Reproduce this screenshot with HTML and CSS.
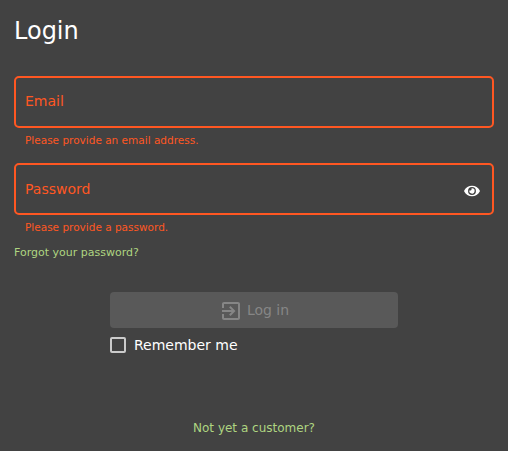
FILE: index.html
```html
<!DOCTYPE html>
<html lang="en">
<head>
<meta charset="utf-8">
<title>Login</title>
<link rel="stylesheet" href="styles.css">
</head>
<body>
<main class="login">
  <h1 class="title">Login</h1>
  <div class="field"><span class="label">Email</span></div>
  <p class="error">Please provide an email address.</p>
  <div class="field field-password"><span class="label">Password</span>
    <svg class="eye" viewBox="0 0 576 512"><path d="M572.520 241.400C518.290 135.590 410.930 64 288 64S57.680 135.640 3.480 241.410a32.350 32.350 0 0 0 0 29.190C57.710 376.410 165.070 448 288 448s230.320-71.640 284.520-177.410a32.350 32.350 0 0 0 0-29.190zM288 400a144 144 0 1 1 144-144 143.930 143.930 0 0 1-144 144zm0-240a95.310 95.310 0 0 0-25.310 3.790 47.850 47.850 0 0 1-66.900 66.900A95.780 95.780 0 1 0 288 160z"/></svg>
  </div>
  <p class="error">Please provide a password.</p>
  <a class="forgot">Forgot your password?</a>
  <div class="actions">
    <button class="submit" disabled>
      <svg class="enter" viewBox="0 0 24 24"><path d="M10.090 15.590L11.500 17l5-5-5-5-1.410 1.410L12.670 11H3v2h9.670l-2.580 2.590zM19 3H5c-1.110 0-2 .9-2 2v4h2V5h14v14H5v-4H3v4c0 1.100.89 2 2 2h14c1.100 0 2-.9 2-2V5c0-1.100-.9-2-2-2z"/></svg>
      <span>Log in</span>
    </button>
    <label class="remember"><span class="box"></span>Remember me</label>
  </div>
  <a class="signup">Not yet a customer?</a>
</main>
</body>
</html>
```

FILE: styles.css
```css
* { box-sizing: border-box; }
body { margin: 0; background: #424242; color: #fff; font-family: "DejaVu Sans", sans-serif; font-size: 14px; }
.login { display: flex; flex-direction: column; height: 451px; padding: 15px 14px 14px; }
.title { margin: 0 0 29px; font-size: 24px; line-height: 32px; font-weight: 400; }
.field { display: flex; align-items: center; justify-content: space-between; height: 52px; padding: 0 12px 2px 9px; border: 2px solid #ff5722; border-radius: 5px; color: #ff5722; }
.field-password { padding-bottom: 0; }
.label { line-height: 20px; }
.eye { width: 16px; height: 14px; margin-top: 4px; fill: #fff; }
.error { margin: 5px 0 15px 11px; height: 15px; line-height: 15px; font-size: 10.5px; color: #ff5722; }
.forgot { margin-top: -5px; line-height: 15px; font-size: 11px; color: #aed581; }
.actions { width: 288px; margin: 32px auto 0; }
.submit { display: flex; align-items: center; justify-content: center; gap: 4px; width: 100%; height: 36px; padding: 0; border: 0; border-radius: 4px; background: #595959; color: #868686; font: inherit; }
.enter { width: 24px; height: 24px; margin-top: 2px; fill: currentColor; }
.remember { display: flex; align-items: center; gap: 8px; margin-top: 7px; line-height: 20px; }
.box { width: 16px; height: 16px; border: 2px solid #cbcbcb; border-radius: 2px; }
.signup { margin-top: auto; align-self: center; line-height: 18px; font-size: 12px; color: #aed581; }
```
